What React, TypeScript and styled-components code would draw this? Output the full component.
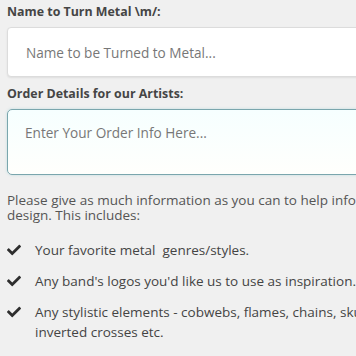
import React from 'react';
import styled, { createGlobalStyle } from 'styled-components';
import { FaCheck } from 'react-icons/fa';

const GlobalStyle = createGlobalStyle`
  html, body {
    margin: 0;
    padding: 0;
    background: #f0f0f0;
    font-family: "Open Sans", "Liberation Sans", sans-serif;
    overflow: hidden;
  }
`;

const Page = styled.div`
  width: 356px;
  height: 356px;
  padding: 4px 0 0 7px;
  box-sizing: border-box;
  overflow: hidden;
`;

const Field = styled.div`
  display: flex;
  flex-direction: column;
  width: 370px;
`;

const Label = styled.label`
  font-size: 12.4px;
  font-weight: 700;
  color: #454545;
  line-height: 16px;
  margin-bottom: 7px;
`;

const TextInput = styled.div`
  height: 50px;
  box-sizing: border-box;
  background: #fff;
  border: 1px solid #dcdcdc;
  border-radius: 4px;
  box-shadow: 0 1px 2px rgba(0, 0, 0, 0.08);
  padding: 0 18px;
  display: flex;
  align-items: center;
  font-size: 13.6px;
  color: #777;
  margin-bottom: 9px;
`;

const TextArea = styled.div`
  height: 66px;
  box-sizing: border-box;
  background: linear-gradient(#f6ffff, #fffffc);
  border: 1px solid #7aa6ad;
  border-radius: 5px;
  box-shadow: 0 0 3px rgba(110, 190, 200, 0.35);
  padding: 13px 17px;
  font-size: 13.6px;
  color: #777;
`;

const Intro = styled.p`
  margin: 18px 0 0;
  font-size: 13.5px;
  line-height: 15px;
  color: #555;
  white-space: nowrap;
`;

const List = styled.ul`
  list-style: none;
  margin: 0;
  padding: 0;
  display: flex;
  flex-direction: column;
  gap: 11px;
  margin-top: 17px;
`;

const Item = styled.li`
  display: flex;
  align-items: flex-start;
  gap: 14px;
  font-size: 13.5px;
  line-height: 20px;
  color: #444;
  width: 410px;
`;

const Tick = styled.span`
  display: flex;
  align-items: center;
  height: 20px;
  color: #2e2e2e;
  font-size: 14px;
  flex: none;
`;

const ItemText = styled.span`
  white-space: pre-wrap;
`;

const items = [
  'Your favorite metal  genres/styles.',
  "Any band's logos you'd like us to use as inspiration.",
  'Any stylistic elements - cobwebs, flames, chains, skulls, inverted crosses etc.',
];

const App: React.FC = () => {
  return (
    <Page>
      <GlobalStyle />
      <Field>
        <Label>Name to Turn Metal \m/:</Label>
        <TextInput>Name to be Turned to Metal...</TextInput>
      </Field>
      <Field>
        <Label>Order Details for our Artists:</Label>
        <TextArea>Enter Your Order Info Here...</TextArea>
      </Field>
      <Intro>
        Please give as much information as you can to help inform the
        <br />
        design. This includes:
      </Intro>
      <List>
        {items.map((text, i) => (
          <Item key={i}>
            <Tick>
              <FaCheck />
            </Tick>
            <ItemText>{text}</ItemText>
          </Item>
        ))}
      </List>
    </Page>
  );
};

export default App;
